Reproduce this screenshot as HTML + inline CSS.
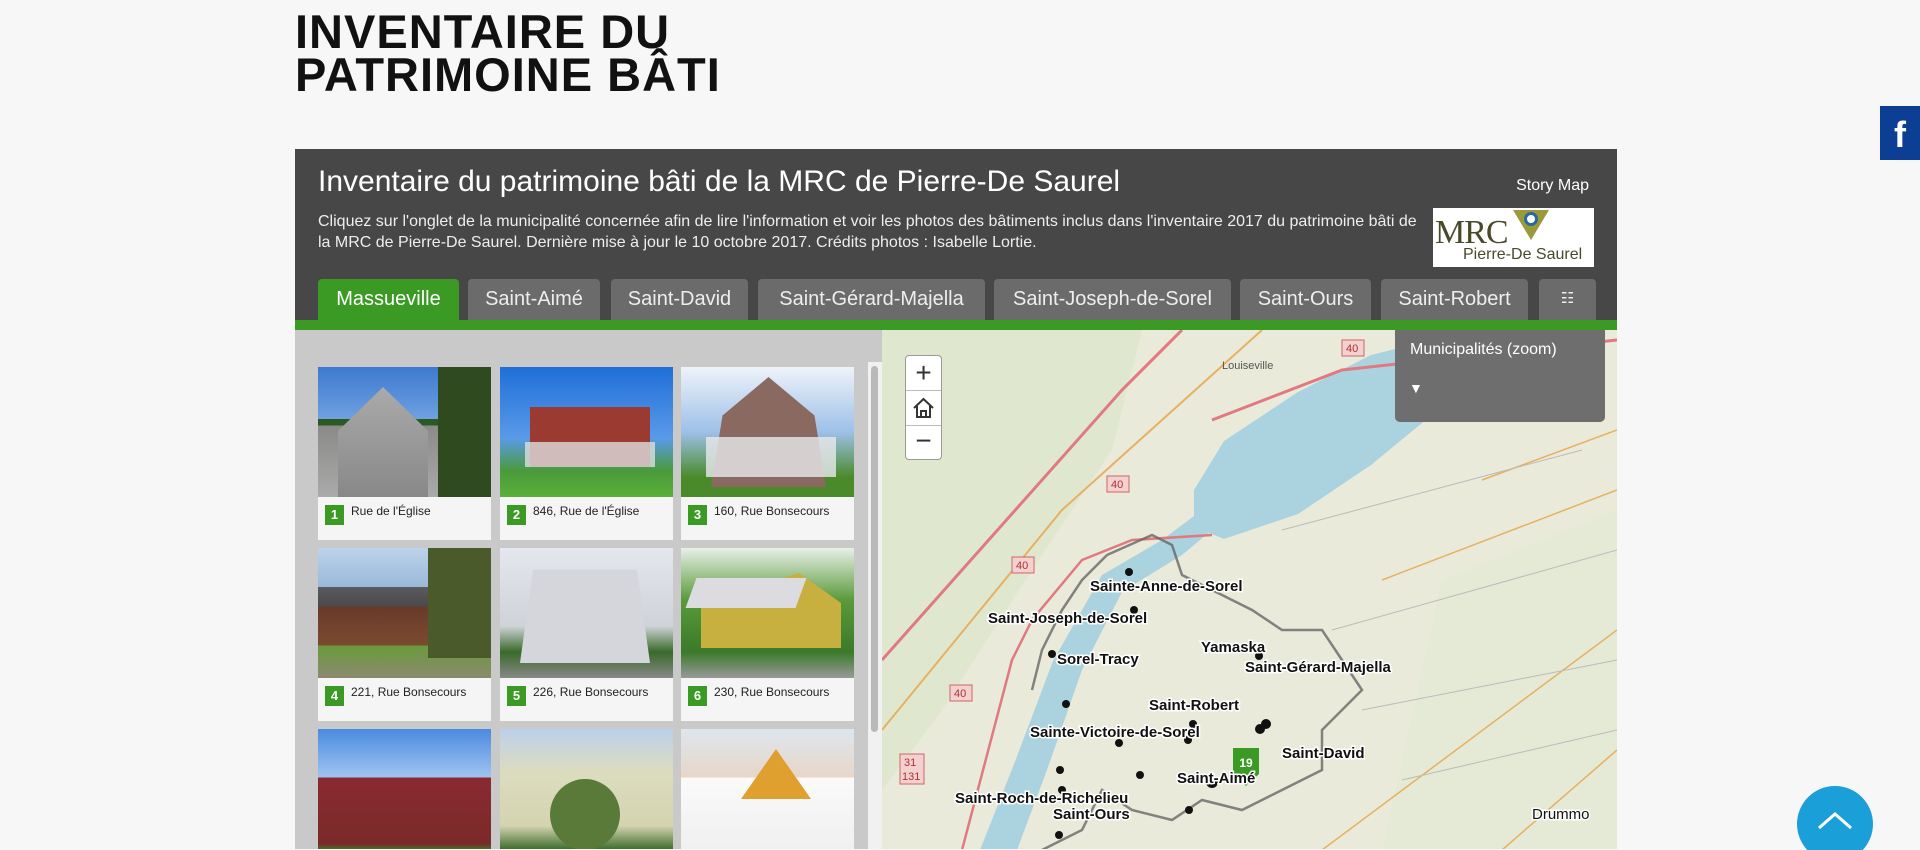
<!DOCTYPE html>
<html><head><meta charset="utf-8"><style>
*{margin:0;padding:0;box-sizing:border-box}
html,body{width:1920px;height:850px;overflow:hidden}
body{background:#f7f7f7;font-family:"Liberation Sans",sans-serif;position:relative}
h1{position:absolute;left:295px;top:10px;font-size:47px;line-height:43px;font-weight:bold;color:#111;letter-spacing:1px}
.panel{position:absolute;left:295px;top:149px;width:1322px;height:700px;background:#474747;overflow:hidden}
.t{position:absolute;color:#fff}
.tab{position:absolute;top:130px;height:41px;background:#6b6b6b;color:#eee;font-size:20px;text-align:center;line-height:40px;border-radius:4px 4px 0 0}
.green{position:absolute;left:0;top:171px;width:1322px;height:10px;background:#3a9a24}
.left{position:absolute;left:0;top:181px;width:587px;height:520px;background:#c9c9c9;overflow:hidden}
.card{position:absolute;width:173px;height:173px;background:#f5f5f5}
.ph{position:absolute;left:0;top:0;width:173px;height:130px;overflow:hidden}
.num{position:absolute;left:7px;top:138px;width:19px;height:20px;background:#3a9a24;color:#fff;font-size:13px;font-weight:bold;text-align:center;line-height:20px}
.cap{position:absolute;left:33px;top:137px;font-size:12px;color:#222}
.map{position:absolute;left:587px;top:181px;width:735px;height:520px;overflow:hidden;background:#ebeadf}
</style></head><body>
<h1>INVENTAIRE DU<br>PATRIMOINE BÂTI</h1>
<div class="panel">
 <div class="t" style="left:23px;top:16px;font-size:30px">Inventaire du patrimoine bâti de la MRC de Pierre-De Saurel</div>
 <div class="t" style="right:28px;top:28px;font-size:16px">Story Map</div>
 <div class="t" style="left:23px;top:62px;font-size:16px;line-height:21px;color:#eee;width:1100px">Cliquez sur l'onglet de la municipalité concernée afin de lire l'information et voir les photos des bâtiments inclus dans l'inventaire 2017 du patrimoine bâti de la MRC de Pierre-De Saurel. Dernière mise à jour le 10 octobre 2017. Crédits photos : Isabelle Lortie.</div>
 <div style="position:absolute;left:1138px;top:59px;width:161px;height:59px;background:#fff">
  <div style="position:absolute;left:2px;top:6px;font-family:'Liberation Serif',serif;font-size:34px;color:#4a4a2a;letter-spacing:-1px">MRC</div>
  <div style="position:absolute;left:80px;top:2px;width:0;height:0;border-left:18px solid transparent;border-right:18px solid transparent;border-top:30px solid #9a9a3a"></div>
  <div style="position:absolute;left:91px;top:4px;width:14px;height:14px;border-radius:50%;background:#fff;border:3px solid #2a6a9a"></div>
  <div style="position:absolute;left:30px;top:38px;font-size:16px;color:#4a4a2a">Pierre-De Saurel</div>
 </div>
 <div class="tab" style="left:23px;width:141px;background:#3a9a24;color:#fff">Massueville</div>
 <div class="tab" style="left:173px;width:132px">Saint-Aimé</div>
 <div class="tab" style="left:316px;width:137px">Saint-David</div>
 <div class="tab" style="left:463px;width:227px">Saint-Gérard-Majella</div>
 <div class="tab" style="left:699px;width:237px">Saint-Joseph-de-Sorel</div>
 <div class="tab" style="left:945px;width:131px">Saint-Ours</div>
 <div class="tab" style="left:1086px;width:147px">Saint-Robert</div>
 <div class="tab" style="left:1244px;width:57px;font-size:15px">☷</div>
 <div class="green"></div>
 <div class="left">
  <div style="position:absolute;left:573px;top:32px;width:14px;height:488px;background:#f1f1f1"></div>
  <div style="position:absolute;left:576px;top:36px;width:7px;height:366px;background:#b9b9b9;border-radius:4px"></div>
  <div class="card" style="left:23px;top:37px"><div class="ph" style="background:linear-gradient(#3d7ad0,#6fa0e0 40%,#2a5a22 40%,#2a5a22 45%,#8a8a88 45%,#aaa 100%)"><div style="position:absolute;left:20px;top:20px;width:90px;height:110px;background:linear-gradient(#aaa,#888);clip-path:polygon(0 40%,50% 0,100% 40%,100% 100%,0 100%)"></div><div style="position:absolute;left:120px;top:0;width:53px;height:130px;background:#2f4a1f"></div></div><div class="num">1</div><div class="cap">Rue de l'Église</div></div>
  <div class="card" style="left:205px;top:37px"><div class="ph" style="background:linear-gradient(#1f6fd8,#5a9ae8 55%,#4a9a3a 80%,#5ab03a)"><div style="position:absolute;left:30px;top:40px;width:120px;height:60px;background:#9a3a30"></div><div style="position:absolute;left:25px;top:75px;width:130px;height:25px;background:#ddd;opacity:.8"></div></div><div class="num">2</div><div class="cap">846, Rue de l'Église</div></div>
  <div class="card" style="left:386px;top:37px"><div class="ph" style="background:linear-gradient(#eef3fa,#9ec0e8 50%,#4a8a2a 85%)"><div style="position:absolute;left:30px;top:10px;width:115px;height:110px;background:#8a6a60;clip-path:polygon(10% 35%,50% 0,90% 35%,100% 100%,0 100%)"></div><div style="position:absolute;left:25px;top:70px;width:130px;height:40px;background:#e8e8ec;opacity:.8"></div></div><div class="num">3</div><div class="cap">160, Rue Bonsecours</div></div>
  <div class="card" style="left:23px;top:218px"><div class="ph" style="background:linear-gradient(#bcd4ea,#9ab8d8 30%,#5a5a60 30%,#4a4a4a 45%,#6a3a2a 45%,#7a4a30 75%,#6a9a3a 75%,#8a8a70)"><div style="position:absolute;left:110px;top:0;width:63px;height:110px;background:#4a5a2a"></div></div><div class="num">4</div><div class="cap">221, Rue Bonsecours</div></div>
  <div class="card" style="left:205px;top:218px"><div class="ph" style="background:linear-gradient(#e4e8ee,#cfd3d8 60%,#3a6a2a 80%,#888)"><div style="position:absolute;left:20px;top:5px;width:130px;height:110px;background:#d4d6dc;clip-path:polygon(10% 15%,90% 15%,100% 100%,0 100%)"></div></div><div class="num">5</div><div class="cap">226, Rue Bonsecours</div></div>
  <div class="card" style="left:386px;top:218px"><div class="ph" style="background:linear-gradient(#e8f0e8,#5a9a3a 40%,#3a7a2a 80%,#999)"><div style="position:absolute;left:20px;top:25px;width:140px;height:75px;background:#c8b040;clip-path:polygon(0 40%,70% 0,100% 40%,100% 100%,0 100%)"></div><div style="position:absolute;left:10px;top:30px;width:110px;height:30px;background:#dcdce0;transform:skewX(-20deg)"></div></div><div class="num">6</div><div class="cap">230, Rue Bonsecours</div></div>
  <div class="card" style="left:23px;top:399px;height:121px"><div class="ph" style="height:121px;background:linear-gradient(#4a8ae0,#a0c4f0 40%,#8a2a30 40%,#7a2a2a 95%,#3a7a2a)"></div></div>
  <div class="card" style="left:205px;top:399px;height:121px"><div class="ph" style="height:121px;background:linear-gradient(#bcd0ec,#dcdcc0 35%,#d4d4b0 80%,#3a6a2a)"><div style="position:absolute;left:50px;top:50px;width:70px;height:71px;background:#5a7a3a;border-radius:50%"></div></div></div>
  <div class="card" style="left:386px;top:399px;height:121px"><div class="ph" style="height:121px;background:linear-gradient(#dde6ee,#e8d6c8 40%,#fafafa 40%,#f0f0f0)"><div style="position:absolute;left:60px;top:20px;width:70px;height:50px;background:#e0a030;clip-path:polygon(50% 0,100% 100%,0 100%)"></div></div></div>
 </div>
 <div class="map">
  <svg width="735" height="520" viewBox="0 0 735 520">
   <rect width="735" height="520" fill="#e9ead9"/>
   <path d="M0 0 L260 0 L230 120 L150 240 L60 380 L0 460Z" fill="#dfe8cf"/>
   <path d="M560 250 L735 180 L735 520 L500 520Z" fill="#e4ead6"/>
   <path d="M312 160 L342 111 L416 62 L489 25 L563 7 L580 0 L600 30 L563 74 L489 135 L416 184 L342 209 L312 197Z" fill="#aad3df"/>
   <path d="M320 180 L280 210 L220 245 L171 331 L134 429 L98 520 L135 520 L165 440 L200 340 L240 262 L300 225 L330 200Z" fill="#aad3df"/>
   <path d="M0 330 L240 60 L300 0" stroke="#e07a80" stroke-width="3" fill="none"/>
   <path d="M0 400 L180 180 L380 0" stroke="#e8b060" stroke-width="2" fill="none"/>
   <path d="M330 90 L460 40 L735 10" stroke="#e07a80" stroke-width="3" fill="none"/>
   <path d="M600 150 L735 100 M500 250 L735 160 M620 520 L735 420 M440 520 L735 300" stroke="#e8b060" stroke-width="1.5" fill="none"/>
   <path d="M450 300 L735 220 M480 380 L735 330 M520 450 L735 400 M400 200 L700 120" stroke="#bbb" stroke-width="1" fill="none"/>
   <path d="M80 520 L130 330 L150 290 L200 230 L250 210 L330 205" stroke="#e07a80" stroke-width="2.5" fill="none"/>
   <path d="M225 225 L270 205 L290 215 L300 245 L330 260 L370 280 L400 300 L440 300 L460 330 L480 360 L460 380 L440 400 L440 440 L400 460 L360 480 L320 470 L290 490 L250 480 L220 460 L200 500 L160 520 M225 225 L200 250 L180 280 L160 320 L150 360" stroke="#666" stroke-width="2.5" fill="none" opacity=".8"/>
   <g fill="#111">
    <circle cx="247" cy="242" r="4"/><circle cx="252" cy="280" r="4"/><circle cx="170" cy="324" r="4"/><circle cx="184" cy="374" r="4"/><circle cx="237" cy="413" r="4"/><circle cx="311" cy="394" r="4"/><circle cx="306" cy="410" r="4"/><circle cx="378" cy="399" r="5"/><circle cx="384" cy="394" r="5"/><circle cx="377" cy="326" r="4"/><circle cx="258" cy="445" r="4"/><circle cx="307" cy="480" r="4"/><circle cx="178" cy="440" r="4"/><circle cx="180" cy="460" r="4"/><circle cx="178" cy="485" r="4"/><circle cx="177" cy="505" r="4"/><circle cx="330" cy="452" r="6"/>
   </g>
   <path d="M351 418 h26 v26 l-13 12 l-13 -12z" fill="#3a9a24"/>
   <text x="364" y="437" font-size="12" fill="#fff" text-anchor="middle" font-weight="bold">19</text>
   <g font-size="15" font-weight="bold" fill="#111" stroke="#fff" stroke-width="3" paint-order="stroke">
    <text x="208" y="261">Sainte-Anne-de-Sorel</text>
    <text x="106" y="293">Saint-Joseph-de-Sorel</text>
    <text x="319" y="322">Yamaska</text>
    <text x="175" y="334">Sorel-Tracy</text>
    <text x="363" y="342">Saint-Gérard-Majella</text>
    <text x="267" y="380">Saint-Robert</text>
    <text x="148" y="407">Sainte-Victoire-de-Sorel</text>
    <text x="400" y="428">Saint-David</text>
    <text x="295" y="453">Saint-Aimé</text>
    <text x="73" y="473">Saint-Roch-de-Richelieu</text>
    <text x="171" y="489">Saint-Ours</text>
    <text x="650" y="489" font-weight="normal">Drummo</text>
   </g>
   <g font-size="11" fill="#a33">
    <rect x="460" y="10" width="22" height="16" fill="#f4d0d0" stroke="#c66"/><text x="464" y="22">40</text>
    <rect x="225" y="146" width="22" height="16" fill="#f4d0d0" stroke="#c66"/><text x="229" y="158">40</text>
    <rect x="130" y="227" width="22" height="16" fill="#f4d0d0" stroke="#c66"/><text x="134" y="239">40</text>
    <rect x="68" y="355" width="22" height="16" fill="#f4d0d0" stroke="#c66"/><text x="72" y="367">40</text>
    <rect x="18" y="424" width="24" height="30" fill="#f4d0d0" stroke="#c66"/><text x="22" y="436">31</text><text x="20" y="450">131</text>
   </g>
   <text x="340" y="39" font-size="11" fill="#555">Louiseville</text>
  </svg>
  <div style="position:absolute;left:23px;top:25px;width:37px;height:105px;background:#fff;border:1px solid #999;border-radius:4px">
   <div style="height:35px;border-bottom:1px solid #bbb;text-align:center;font-size:28px;line-height:33px;color:#333">+</div>
   <div style="height:35px;border-bottom:1px solid #bbb;position:relative"><svg width="35" height="34" viewBox="0 0 35 34"><path d="M8 17 L17.5 8 L27 17 M11 15 V26 H24 V15 M15 26 V20 H20 V26" stroke="#333" stroke-width="2" fill="none"/></svg></div>
   <div style="text-align:center;font-size:28px;line-height:30px;color:#333">−</div>
  </div>
  <div style="position:absolute;left:513px;top:0;width:210px;height:92px;background:#6e6e6e;border-radius:0 0 5px 5px;color:#fff">
   <div style="position:absolute;left:15px;top:11px;font-size:16px">Municipalités (zoom)</div>
   <div style="position:absolute;left:14px;top:50px;font-size:14px">▼</div>
  </div>
 </div>
</div>
<div style="position:absolute;left:1880px;top:106px;width:40px;height:54px;background:#0c3f94;color:#fff;font-size:36px;font-weight:bold;text-align:center;line-height:58px">f</div>
<div style="position:absolute;left:1797px;top:786px;width:76px;height:64px;overflow:hidden"><div style="width:76px;height:76px;border-radius:50%;background:#1a9fd9"><svg width="76" height="64" viewBox="0 0 76 64"><path d="M22 42 L38 28 L54 42" stroke="#fff" stroke-width="3" fill="none"/></svg></div></div>
</body></html>
